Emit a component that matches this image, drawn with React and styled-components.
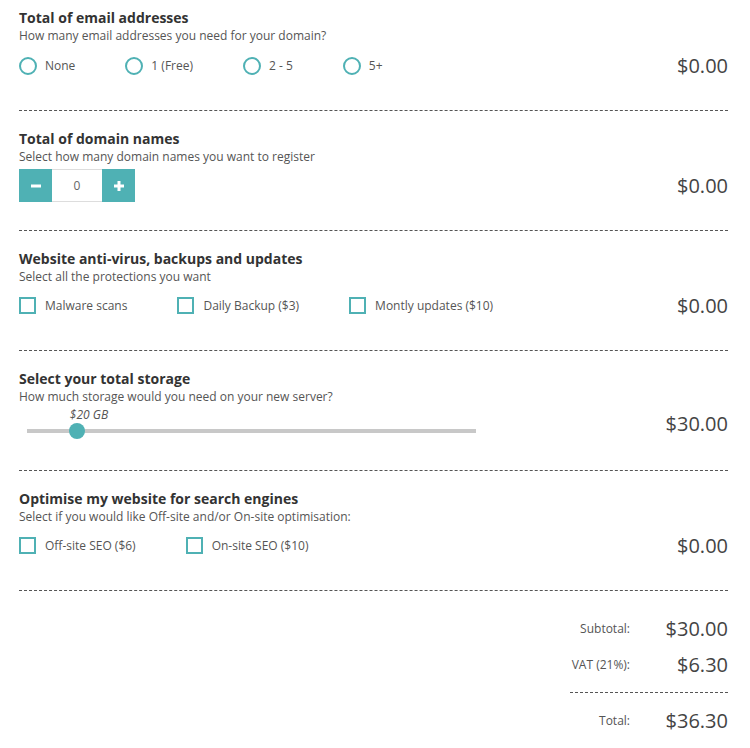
import React from "react";
import styled, { createGlobalStyle } from "styled-components";

const Global = createGlobalStyle`
  html, body { margin: 0; padding: 0; background: #fff; }
  body { font-family: "Open Sans", "Noto Sans", sans-serif; color: #333; }
  * { box-sizing: border-box; }
`;

const TEAL = "#4fb1b4";

const Page = styled.div`
  width: 750px;
  padding: 0 22px 0 19px;
`;

const Section = styled.section`
  height: ${(p) => (p.$first ? 111 : 120)}px;
  padding-top: ${(p) => (p.$first ? 8 : 18)}px;
  border-bottom: 1px dashed #555;
  display: flex;
  flex-direction: column;
`;

const Title = styled.h2`
  margin: 0;
  font-size: 14px;
  line-height: 19px;
  font-weight: 700;
  color: #333;
`;

const Subtitle = styled.p`
  margin: 1px 0 0;
  font-size: 12px;
  line-height: 16px;
  color: #555;
`;

const ControlRow = styled.div`
  margin-top: ${(p) => p.$offset}px;
  display: flex;
  align-items: center;
  min-height: 20px;
`;

const Options = styled.div`
  display: flex;
  align-items: center;
  gap: 50px;
`;

const Option = styled.label`
  display: flex;
  align-items: center;
  gap: ${(p) => (p.$box ? 9 : 8)}px;
  font-size: 12px;
  line-height: 20px;
  color: #555;
`;

const Radio = styled.span`
  width: 18px;
  height: 18px;
  border-radius: 50%;
  border: 2px solid ${TEAL};
  background: #fff;
`;

const Check = styled.span`
  width: 17px;
  height: 17px;
  border: 2px solid ${TEAL};
  background: #fff;
`;

const Price = styled.div`
  margin-left: auto;
  font-size: 20px;
  line-height: 27px;
  color: #444;
`;

const Stepper = styled.div`
  display: flex;
  height: 33px;
`;

const StepButton = styled.button`
  width: 33px;
  height: 33px;
  border: 0;
  padding: 0;
  background: ${TEAL};
  display: flex;
  align-items: center;
  justify-content: center;
`;

const StepValue = styled.div`
  width: 50px;
  border-top: 1px solid #ddd;
  border-bottom: 1px solid #ddd;
  display: flex;
  align-items: center;
  justify-content: center;
  font-size: 12px;
  color: #666;
`;

const SliderBlock = styled.div`
  position: relative;
  margin-left: 8px;
  width: 449px;
  height: 32px;
`;

const SliderLabel = styled.span`
  position: absolute;
  top: 0;
  font-size: 12px;
  line-height: 16px;
  font-style: italic;
  color: #555;
`;

const Track = styled.div`
  position: absolute;
  left: 0;
  right: 0;
  top: 22px;
  height: 4px;
  background: #c8c8c8;
`;

const Thumb = styled.span`
  position: absolute;
  top: 16px;
  width: 16px;
  height: 16px;
  margin-left: -8px;
  border-radius: 50%;
  background: ${TEAL};
`;

const Summary = styled.div`
  margin-left: auto;
  width: 158px;
  padding-top: 24px;
  display: flex;
  flex-direction: column;
`;

const SumRow = styled.div`
  display: grid;
  grid-template-columns: 60px 1fr;
  align-items: center;
  height: 27px;
  margin-bottom: ${(p) => p.$mb || 0}px;
`;

const SumLabel = styled.span`
  text-align: right;
  font-size: 12px;
  color: #555;
`;

const SumValue = styled.span`
  text-align: right;
  font-size: 20px;
  line-height: 27px;
  color: #444;
`;

const SumDivider = styled.div`
  border-top: 1px dashed #555;
  margin: 14px 0;
`;

const Minus = () => (
  <svg width="12" height="12" viewBox="0 0 12 12">
    <rect x="1" y="4.5" width="10" height="3" fill="#fff" />
  </svg>
);
const Plus = () => (
  <svg width="12" height="12" viewBox="0 0 12 12">
    <rect x="1" y="4.5" width="10" height="3" fill="#fff" />
    <rect x="4.5" y="1" width="3" height="10" fill="#fff" />
  </svg>
);

export default function App() {
  const sliderPct = 0.111;
  return (
    <Page>
      <Global />
      <Section $first>
        <Title>Total of email addresses</Title>
        <Subtitle>How many email addresses you need for your domain?</Subtitle>
        <ControlRow $offset={8}>
          <Options>
            {["None", "1 (Free)", "2 - 5", "5+"].map((o) => (
              <Option key={o}>
                <Radio />
                {o}
              </Option>
            ))}
          </Options>
          <Price>$0.00</Price>
        </ControlRow>
      </Section>

      <Section>
        <Title>Total of domain names</Title>
        <Subtitle>Select how many domain names you want to register</Subtitle>
        <ControlRow $offset={4}>
          <Stepper>
            <StepButton aria-label="decrease"><Minus /></StepButton>
            <StepValue>0</StepValue>
            <StepButton aria-label="increase"><Plus /></StepButton>
          </Stepper>
          <Price>$0.00</Price>
        </ControlRow>
      </Section>

      <Section>
        <Title>Website anti-virus, backups and updates</Title>
        <Subtitle>Select all the protections you want</Subtitle>
        <ControlRow $offset={7}>
          <Options>
            {["Malware scans", "Daily Backup ($3)", "Montly updates ($10)"].map((o) => (
              <Option key={o} $box>
                <Check />
                {o}
              </Option>
            ))}
          </Options>
          <Price>$0.00</Price>
        </ControlRow>
      </Section>

      <Section>
        <Title>Select your total storage</Title>
        <Subtitle>How much storage would you need on your new server?</Subtitle>
        <ControlRow $offset={2}>
          <SliderBlock>
            <SliderLabel style={{ left: `${sliderPct * 449 - 7}px` }}>$20 GB</SliderLabel>
            <Track />
            <Thumb style={{ left: `${sliderPct * 100}%` }} />
          </SliderBlock>
          <Price>$30.00</Price>
        </ControlRow>
      </Section>

      <Section>
        <Title>Optimise my website for search engines</Title>
        <Subtitle>Select if you would like Off-site and/or On-site optimisation:</Subtitle>
        <ControlRow $offset={7}>
          <Options>
            {["Off-site SEO ($6)", "On-site SEO ($10)"].map((o) => (
              <Option key={o} $box>
                <Check />
                {o}
              </Option>
            ))}
          </Options>
          <Price>$0.00</Price>
        </ControlRow>
      </Section>

      <Summary>
        <SumRow $mb={9}>
          <SumLabel>Subtotal:</SumLabel>
          <SumValue>$30.00</SumValue>
        </SumRow>
        <SumRow>
          <SumLabel>VAT (21%):</SumLabel>
          <SumValue>$6.30</SumValue>
        </SumRow>
        <SumDivider />
        <SumRow>
          <SumLabel>Total:</SumLabel>
          <SumValue>$36.30</SumValue>
        </SumRow>
      </Summary>
    </Page>
  );
}
